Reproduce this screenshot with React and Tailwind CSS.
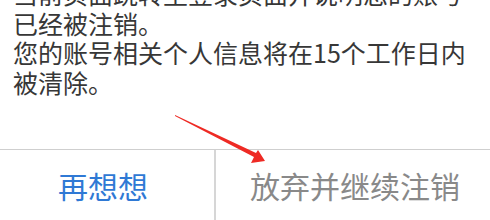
export default function App() {
  const font = { fontFamily: '"Noto Sans CJK SC", "Noto Sans", sans-serif' };

  return (
    <div className="relative w-[490px] h-[220px] overflow-hidden bg-white" style={font}>
      <div className="h-[149px] overflow-hidden">
        <p className="mt-[-21px] pl-[13px] pr-[12px] text-[25px] leading-[29.5px] text-[#373737]">
          当前页面跳转至登录页面并说明您的账号
          <br />
          已经被注销。
          <br />
          您的账号相关个人信息将在15个工作日内
          <br />
          被清除。
        </p>
      </div>

      <div className="flex h-[71px] border-t border-[#cfcfcf]">
        <button className="w-[216px] pr-[8px] flex items-center justify-center border-r-2 border-[#d6d6d6] text-[30px] text-[#2f79d5]">
          再想想
        </button>
        <button className="flex-1 flex items-center justify-center pl-[4px] text-[30px] text-[#898989]">
          放弃并继续注销
        </button>
      </div>

      {/* red pointer arrow */}
      <svg className="absolute left-0 top-0" width="490" height="220" viewBox="0 0 490 220">
        <polygon points="175,115 256,153 258,150 265,161 251,163 254,157 175,116" fill="#ee2a24" />
      </svg>
    </div>
  );
}
